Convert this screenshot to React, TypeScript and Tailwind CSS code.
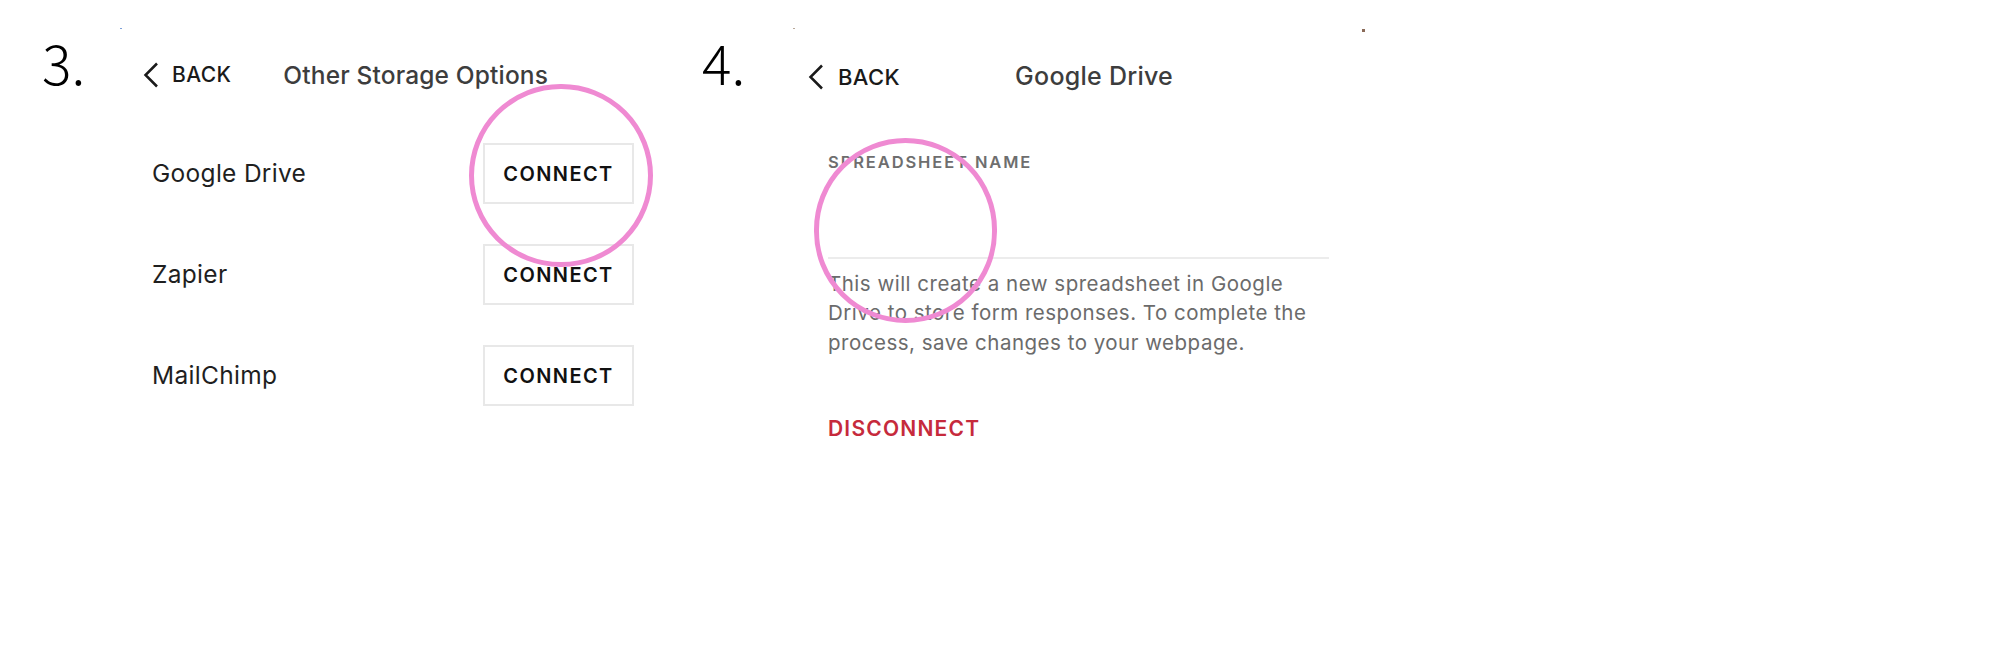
const Chevron = () => (
  <svg width="16" height="26" viewBox="0 0 16 26" fill="none">
    <path d="M14 1.5 L2.5 13 L14 24.5" stroke="#1a1a1a" strokeWidth="2.5" />
  </svg>
);

const services = ['Google Drive', 'Zapier', 'MailChimp'];

export default function App() {
  return (
    <div className="relative w-[2000px] h-[662px] bg-white font-['Inter',sans-serif] overflow-hidden">
      <div className="flex pt-[62px]">
        {/* step 3 */}
        <section className="flex w-[702px] pl-[42px]">
          <div className="w-[101px] -mt-[28px] text-[55px] leading-none font-light text-black font-['Noto_Sans_CJK_JP',sans-serif]">
            3.
          </div>
          <div className="flex flex-col">
            <div className="flex h-[26px] items-center">
              <Chevron />
              <span className="ml-[13px] text-[21px] font-medium tracking-[0.4px] text-[#1a1a1a]">BACK</span>
              <span className="ml-[52px] text-[24.5px] font-medium tracking-[0.15px] text-[#3d3d3d]">Other Storage Options</span>
            </div>
            <div className="mt-[55px] flex w-[491px] flex-col gap-[40px] pl-[9px]">
              {services.map((s) => (
                <div key={s} className="flex h-[61px] items-center justify-between">
                  <span className="text-[24.5px] tracking-[0.3px] text-[#1f1f1f]">{s}</span>
                  <button className="flex h-[61px] w-[151px] items-center justify-center border-2 border-[#e8e8e8] text-[20px] font-semibold tracking-[1.4px] text-[#111]">
                    CONNECT
                  </button>
                </div>
              ))}
            </div>
          </div>
        </section>

        {/* step 4 */}
        <section className="flex">
          <div className="w-[106px] -mt-[28px] text-[55px] leading-none font-light text-black font-['Noto_Sans_CJK_JP',sans-serif]">
            4.
          </div>
          <div className="flex flex-col">
            <div className="mt-[2px] flex h-[26px] items-center">
              <Chevron />
              <span className="ml-[14px] text-[22px] font-medium tracking-[0.4px] text-[#1a1a1a]">BACK</span>
              <span className="ml-[115px] text-[25px] font-medium tracking-[0.25px] text-[#3d3d3d]">Google Drive</span>
            </div>
            <div className="ml-[20px] mt-[60px] w-[501px]">
              <div className="text-[16.5px] font-semibold tracking-[1.9px] text-[#6e6e6e]">SPREADSHEET NAME</div>
              <div className="mt-[82px] h-[2px] bg-[#ececec]" />
              <p className="mt-[10px] text-[20.5px] leading-[29.5px] tracking-[0.5px] text-[#6b6b6b]">
                This will create a new spreadsheet in Google
                <br />
                Drive to store form responses. To complete the
                <br />
                process, save changes to your webpage.
              </p>
              <div className="mt-[56px] text-[21px] font-semibold tracking-[1.2px] text-[#c62a3c]">DISCONNECT</div>
            </div>
          </div>
        </section>
      </div>

      {/* annotation rings */}
      <div className="absolute left-[469px] top-[84px] h-[183px] w-[184px] rounded-full border-[5px] border-[#ef8ad2]" />
      <div className="absolute left-[814px] top-[138px] h-[185px] w-[183px] rounded-full border-[5px] border-[#ef8ad2]" />

      {/* crop specks */}
      <span className="absolute left-[120px] top-[28px] h-[1px] w-[2px] bg-[#7da0d8]" />
      <span className="absolute left-[793px] top-[28px] h-[1px] w-[2px] bg-[#b8a89a]" />
      <span className="absolute left-[1362px] top-[29px] h-[3px] w-[3px] bg-[#8a6a58]" />
    </div>
  );
}
